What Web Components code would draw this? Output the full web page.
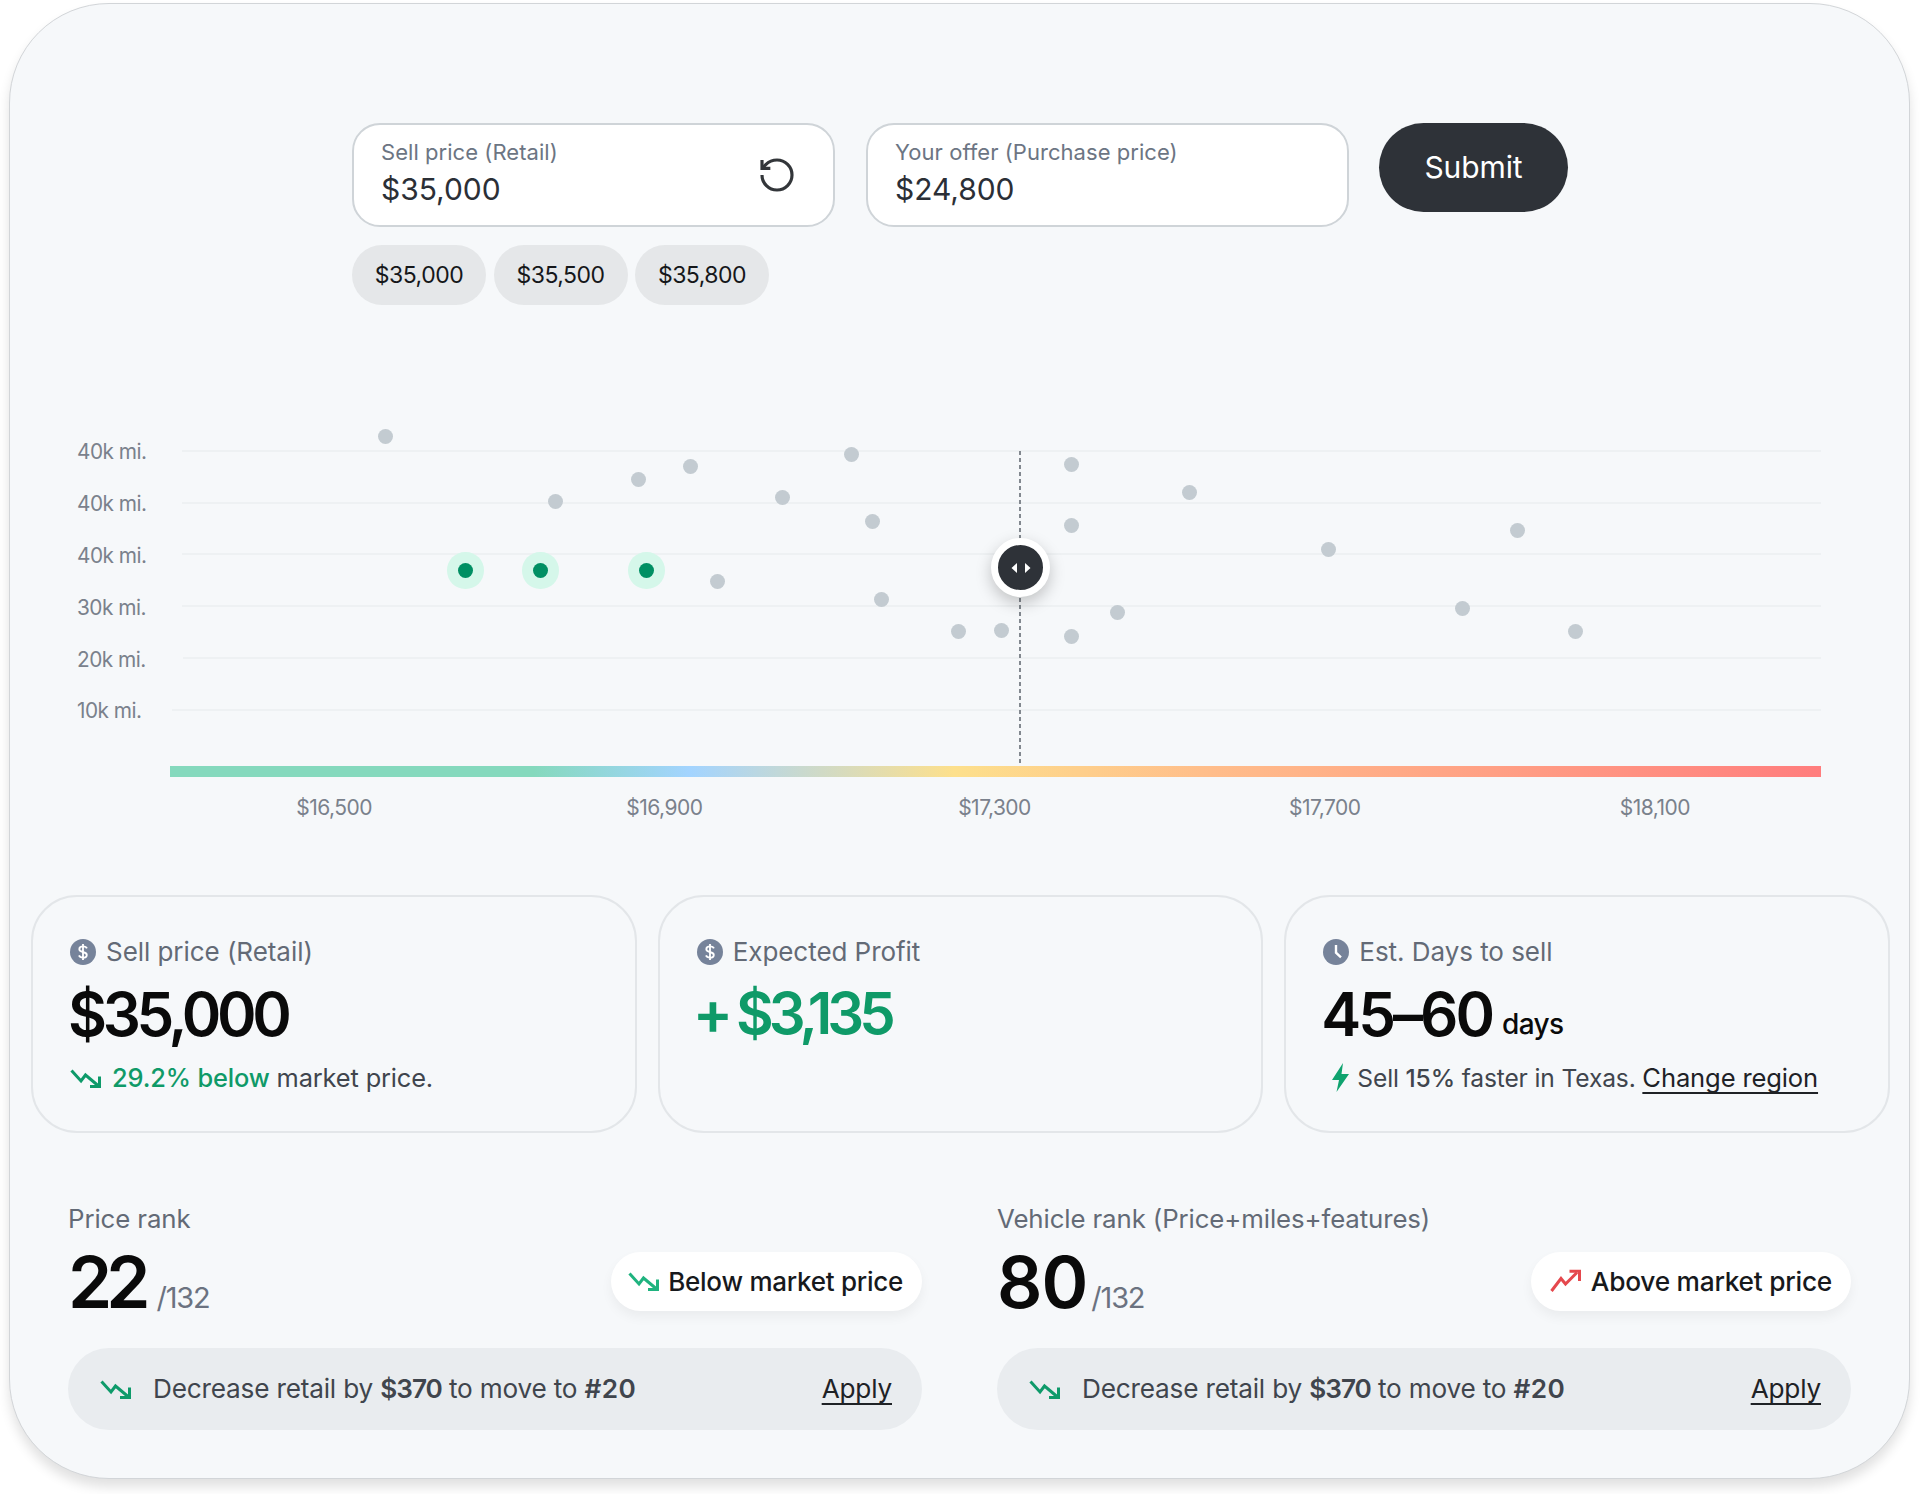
<!DOCTYPE html>
<html lang="en">
<head>
<meta charset="utf-8">
<title>Pricing</title>
<style>
  html, body { margin: 0; background: #fff; }
  body { font-family: Inter, "Liberation Sans", sans-serif; width: 1920px; height: 1494px; overflow: hidden; }
  .row { display: flex; }
  svg { display: block; }
  b { font-weight: 600; }
</style>
</head>
<body>
<svg width="0" height="0" style="position:absolute">
  <defs>
    <symbol id="dollar" viewBox="0 0 24 24"><circle cx="12" cy="12" r="12" fill="#76839a"/><path d="M15.6 8.6 C15 7.2 13.7 6.8 12 6.8 C10 6.8 8.6 7.8 8.6 9.4 C8.6 11 10 11.5 12 12 C14 12.5 15.5 13.1 15.5 14.7 C15.5 16.3 14 17.2 12 17.2 C10.2 17.2 8.9 16.6 8.3 15.2 M12 4.6 V19.4" fill="none" stroke="#fff" stroke-width="1.7"/></symbol>
    <symbol id="clock" viewBox="0 0 24 24"><circle cx="12" cy="12" r="12" fill="#76839a"/><path d="M12 5.5 V12.6 L16.6 17" fill="none" stroke="#fff" stroke-width="2.2"/></symbol>
  </defs>
</svg>

<template id="t-frame">
  <style>
    :host { display: block; box-sizing: border-box; width: 1901px; height: 1476px; margin: 3px 0 0 9px; padding: 119px 17px 0 21px;
      background: #f6f8fa; border: 1px solid #d2d5d8; border-radius: 100px; box-shadow: 0 8px 12px rgba(0,0,0,.12); }
  </style><slot></slot>
</template>

<template id="t-form">
  <style>
    :host { display: block; margin-left: 321px; }
    .top { display: flex; align-items: flex-start; gap: 30px; }
    .fields { display: flex; gap: 31px; }
    .chips { display: flex; gap: 7.5px; margin-top: 18px; }
  </style>
  <div class="top"><div class="fields"><slot name="field"></slot></div><slot name="submit"></slot></div>
  <div class="chips"><slot name="chip"></slot></div>
</template>

<template id="t-field">
  <style>
    :host { display: flex; align-items: center; justify-content: space-between; box-sizing: border-box; width: 483px; height: 104px;
      padding: 0 36px 0 27px; background: #fff; border: 2px solid #cfd4d8; border-radius: 28px; }
    .label { font-size: 22px; line-height: 28px; color: #6c7583; letter-spacing: .05px; margin-top: -5px; }
    .value { font-size: 30px; line-height: 36px; color: #2b2f36; margin-top: 5px; letter-spacing: -.05px; }
  </style>
  <div><div class="label"><slot name="label"></slot></div><div class="value"><slot name="value"></slot></div></div>
  <slot name="action"></slot>
</template>

<template id="t-submit">
  <style>
    :host { display: flex; align-items: center; justify-content: center; box-sizing: border-box; width: 189px; height: 89px; padding-bottom: 2px; border-radius: 45px;
      background: #2e3238; color: #fff; font-size: 30px; font-weight: 400; letter-spacing: -.1px; }
  </style><slot></slot>
</template>

<template id="t-chip">
  <style>
    :host { display: flex; align-items: center; justify-content: center; width: 134px; height: 60px; border-radius: 30px;
      background: #e5e7e9; color: #15171a; font-size: 23px; letter-spacing: -.5px; }
  </style><slot></slot>
</template>

<template id="t-chart">
  <style>
    :host { display: block; position: relative; margin-top: 120px; }
    .rows { display: flex; flex-direction: column; padding: 0 71px 0 46px; }
    .bar { height: 11px; margin: 30px 71px 0 139px;
      background: linear-gradient(90deg, #85d9bd 0%, #85d9bd 22%, #a3d4ff 31.5%, #fde08c 47.5%, #ffbd8a 63%, #ff7d7d 100%); }
    .axis { display: flex; margin: 18px 72px 0 138px; }
    .guide { position: absolute; left: 988px; top: 26px; width: 2px; height: 315px;
      background: repeating-linear-gradient(180deg, #82888f 0 4px, transparent 4px 7px); }
  </style>
  <div class="rows"><slot name="row"></slot></div>
  <div class="bar"></div>
  <div class="axis"><slot name="tick"></slot></div>
  <div class="guide"></div>
  <slot></slot>
</template>

<template id="t-row">
  <style>
    :host { display: flex; align-items: center; height: 51.8px; color: #7a818c; font-size: 20.8px; letter-spacing: -.5px; }
    .t { width: var(--lw, 105px); flex: none; padding-top: 2px; }
    .l { flex: 1; height: 2px; background: #eef1f3; }
  </style>
  <div class="t"><slot></slot></div><div class="l"></div>
</template>

<template id="t-tick">
  <style>:host { display: block; flex: 1; text-align: center; color: #7a818c; font-size: 21px; line-height: 26px; letter-spacing: -.5px; }</style><slot></slot>
</template>

<template id="t-dot">
  <style>
    :host { position: absolute; left: var(--x); top: var(--y); width: 15px; height: 15px; margin: -7.5px 0 0 -7.5px; border-radius: 50%; background: #c3cbd1; }
    :host([hot]) { background: #008f63; box-shadow: 0 0 0 11px #d5f7ea; }
  </style>
</template>

<template id="t-handle">
  <style>
    :host { position: absolute; left: 960px; top: 113px; display: flex; align-items: center; justify-content: center; box-sizing: border-box;
      width: 59px; height: 59px; border-radius: 50%; background: #2e3238; border: 7.5px solid #fff; box-shadow: 0 6px 16px rgba(0,0,0,.22); }
  </style>
  <svg width="20" height="12" viewBox="0 0 20 12"><path d="M6 1 V11 L0.5 6 Z M14 1 V11 L19.5 6 Z" fill="#fff"/></svg>
</template>

<template id="t-stats">
  <style>:host { display: flex; gap: 21px; margin: 74px 2px 0 0; }</style><slot></slot>
</template>

<template id="t-stat">
  <style>
    :host { display: block; flex: 1; box-sizing: border-box; height: 238px; padding: 42px 0 0 37px; border: 2px solid #e3e6e9; border-radius: 46px; }
    .head { display: flex; align-items: center; gap: 10px; height: 26px; font-size: 26px; color: #636a76; letter-spacing: -.05px; }
    .val { display: flex; align-items: baseline; height: 70px; line-height: 70px; margin: 14px 0 0 -2px; font-size: 60px; font-weight: 600; letter-spacing: -4.3px; color: #0a0a0a; }
    .note { display: flex; align-items: center; height: 30px; margin-top: 14px; font-size: 25.4px; color: #40454d; letter-spacing: -.15px; }
  </style>
  <div class="head"><slot name="icon"></slot><slot name="label"></slot></div>
  <div class="val"><slot name="value"></slot></div>
  <div class="note"><slot name="note"></slot></div>
</template>

<template id="t-ranks">
  <style>:host { display: flex; gap: 75px; padding: 0 41px 0 37px; margin-top: 71px; }</style><slot></slot>
</template>

<template id="t-rank">
  <style>
    :host { display: block; flex: 1; min-width: 0; }
    .title { font-size: 25.8px; line-height: 30px; color: #636a76; letter-spacing: -.1px; }
    .mid { display: flex; align-items: center; justify-content: space-between; height: 59px; margin-top: 18px; }
    .num { display: flex; align-items: baseline; margin-top: 17px; }
    .big { font-size: 71px; line-height: 59px; font-weight: 600; letter-spacing: -6px; color: #0a0a0a; }
    .of { font-size: 29px; line-height: 59px; color: #6b7280; letter-spacing: -1.2px; }
    .tip { display: flex; align-items: center; justify-content: space-between; box-sizing: border-box; height: 82px; margin-top: 37px; padding: 0 30px 0 32px;
      border-radius: 41px; background: #e9ecef; font-size: 26.2px; color: #40454d; letter-spacing: -.2px; }
    .tip .left { display: flex; align-items: center; gap: 22px; }
  </style>
  <div class="title"><slot name="title"></slot></div>
  <div class="mid">
    <div class="num"><span class="big"><slot name="rank"></slot></span><span class="of"><slot name="of"></slot></span></div>
    <slot name="pill"></slot>
  </div>
  <div class="tip"><div class="left"><slot name="icon"></slot><span><slot name="tip"></slot></span></div><slot name="apply"></slot></div>
</template>

<template id="t-pill">
  <style>
    :host { display: flex; align-items: center; gap: 9px; height: 59px; box-sizing: border-box; padding: 0 19px 0 17px; border-radius: 30px; background: #fff;
      box-shadow: 0 6px 12px rgba(0,0,0,.05); font-size: 26px; font-weight: 500; color: #17191c; letter-spacing: -.25px; --c: #1fb37f; }
  </style><slot></slot>
</template>

<template id="t-icon">
  <style>:host { display: block; flex: none; color: var(--c, #0e9a6a); width: var(--w, 31px); height: var(--h, 20px); }
    svg { display: block; width: 100%; height: 100%; }</style>
</template>

<template id="t-link">
  <style>:host { color: #1f2226; text-decoration: underline; text-decoration-thickness: 2px; text-underline-offset: 5px; text-decoration-skip-ink: none; }</style><slot></slot>
</template>

<frame-card>
  <offer-form>
    <offer-field slot="field">
      <span slot="label">Sell price (Retail)</span>
      <span slot="value">$35,000</span>
      <svg slot="action" width="40" height="40" viewBox="0 0 24 24" fill="none" stroke="#33363a" stroke-width="1.9"><path d="M3 12a9 9 0 1 0 9-9 9.75 9.75 0 0 0-6.74 2.74L3 8"/><path d="M3 3v5h5"/></svg>
    </offer-field>
    <offer-field slot="field">
      <span slot="label">Your offer (Purchase price)</span>
      <span slot="value">$24,800</span>
    </offer-field>
    <submit-button slot="submit">Submit</submit-button>
    <price-chip slot="chip">$35,000</price-chip>
    <price-chip slot="chip">$35,500</price-chip>
    <price-chip slot="chip">$35,800</price-chip>
  </offer-form>

  <scatter-chart>
    <chart-row slot="row">40k mi.</chart-row>
    <chart-row slot="row">40k mi.</chart-row>
    <chart-row slot="row">40k mi.</chart-row>
    <chart-row slot="row">30k mi.</chart-row>
    <chart-row slot="row" style="--lw:106px">20k mi.</chart-row>
    <chart-row slot="row" style="--lw:95px">10k mi.</chart-row>
    <chart-tick slot="tick">$16,500</chart-tick>
    <chart-tick slot="tick">$16,900</chart-tick>
    <chart-tick slot="tick">$17,300</chart-tick>
    <chart-tick slot="tick">$17,700</chart-tick>
    <chart-tick slot="tick">$18,100</chart-tick>
    <chart-dot style="--x:354px;--y:11px"></chart-dot>
    <chart-dot style="--x:524.5px;--y:76px"></chart-dot>
    <chart-dot style="--x:607px;--y:54px"></chart-dot>
    <chart-dot style="--x:659px;--y:41px"></chart-dot>
    <chart-dot style="--x:820px;--y:29.7px"></chart-dot>
    <chart-dot style="--x:751px;--y:72.7px"></chart-dot>
    <chart-dot style="--x:841px;--y:96.7px"></chart-dot>
    <chart-dot style="--x:686px;--y:156px"></chart-dot>
    <chart-dot style="--x:850.4px;--y:174.7px"></chart-dot>
    <chart-dot style="--x:927px;--y:206px"></chart-dot>
    <chart-dot style="--x:970px;--y:205.7px"></chart-dot>
    <chart-dot style="--x:1040.8px;--y:39px"></chart-dot>
    <chart-dot style="--x:1158.8px;--y:67px"></chart-dot>
    <chart-dot style="--x:1040.8px;--y:100.7px"></chart-dot>
    <chart-dot style="--x:1297px;--y:124.3px"></chart-dot>
    <chart-dot style="--x:1486.6px;--y:105.7px"></chart-dot>
    <chart-dot style="--x:1086px;--y:187.3px"></chart-dot>
    <chart-dot style="--x:1040.8px;--y:211.7px"></chart-dot>
    <chart-dot style="--x:1431.7px;--y:183.7px"></chart-dot>
    <chart-dot style="--x:1544.6px;--y:206px"></chart-dot>
    <chart-dot hot style="--x:434.6px;--y:145px"></chart-dot>
    <chart-dot hot style="--x:509.8px;--y:145px"></chart-dot>
    <chart-dot hot style="--x:615px;--y:145px"></chart-dot>
    <chart-handle></chart-handle>
  </scatter-chart>

  <stat-row>
    <stat-card>
      <svg slot="icon" width="26" height="26"><use href="#dollar"/></svg>
      <span slot="label">Sell price (Retail)</span>
      <span slot="value">$35,000</span>
      <span slot="note" class="row" style="align-items:center;gap:11px">
        <trend-icon kind="down"></trend-icon>
        <span><span style="color:#0f9a68;font-weight:500">29.2% below</span> market price.</span>
      </span>
    </stat-card>
    <stat-card>
      <svg slot="icon" width="26" height="26"><use href="#dollar"/></svg>
      <span slot="label">Expected Profit</span>
      <span slot="value" class="row" style="color:#0f9a68;align-items:baseline;margin:-2px 0 0 -2px"><span style="letter-spacing:0;margin-right:3px">+</span><span style="font-size:58px;letter-spacing:-5px">$3,135</span></span>
    </stat-card>
    <stat-card>
      <svg slot="icon" width="26" height="26"><use href="#clock"/></svg>
      <span slot="label">Est. Days to sell</span>
      <span slot="value" style="letter-spacing:-3px">45–60<span style="font-size:28px;font-weight:500;letter-spacing:-.6px;margin-left:10px;vertical-align:2px">days</span></span>
      <span slot="note" class="row" style="align-items:center;gap:8px">
        <svg width="17" height="29" viewBox="0 0 17 29" style="margin-left:9px"><path d="M11 0 L0 17 H7 L4.5 29 L17 11 H9.5 Z" fill="#0fa36f"/></svg>
        <span style="font-size:24.6px">Sell <span style="font-weight:500">15%</span> faster in Texas. <text-link style="font-size:25.6px">Change region</text-link></span>
      </span>
    </stat-card>
  </stat-row>

  <rank-row>
    <rank-panel>
      <span slot="title">Price rank</span>
      <span slot="rank">22</span>
      <span slot="of" style="margin-left:12px">/132</span>
      <market-pill slot="pill"><trend-icon kind="down"></trend-icon>Below market price</market-pill>
      <trend-icon slot="icon" kind="down"></trend-icon>
      <span slot="tip">Decrease retail by <b style="letter-spacing:-1px">$370</b> to move to <b style="letter-spacing:.4px">#20</b></span>
      <text-link slot="apply">Apply</text-link>
    </rank-panel>
    <rank-panel>
      <span slot="title">Vehicle rank (Price+miles+features)</span>
      <span slot="rank" style="letter-spacing:-1px">80</span>
      <span slot="of" style="margin-left:4px">/132</span>
      <market-pill slot="pill" style="font-size:26.3px;padding-left:19px;gap:10px"><trend-icon kind="up"></trend-icon>Above market price</market-pill>
      <trend-icon slot="icon" kind="down"></trend-icon>
      <span slot="tip">Decrease retail by <b style="letter-spacing:-1px">$370</b> to move to <b style="letter-spacing:.4px">#20</b></span>
      <text-link slot="apply">Apply</text-link>
    </rank-panel>
  </rank-row>
</frame-card>

<script>
  const map = { 'frame-card':'t-frame','offer-form':'t-form','offer-field':'t-field','submit-button':'t-submit','price-chip':'t-chip',
    'scatter-chart':'t-chart','chart-row':'t-row','chart-tick':'t-tick','chart-dot':'t-dot','chart-handle':'t-handle',
    'stat-row':'t-stats','stat-card':'t-stat','rank-row':'t-ranks','rank-panel':'t-rank','market-pill':'t-pill','text-link':'t-link' };
  for (const [name, id] of Object.entries(map)) {
    customElements.define(name, class extends HTMLElement {
      constructor() { super(); this.attachShadow({mode:'open'}).append(document.getElementById(id).content.cloneNode(true)); }
    });
  }
  customElements.define('trend-icon', class extends HTMLElement {
    constructor() {
      super();
      this.attachShadow({mode:'open'}).append(document.getElementById('t-icon').content.cloneNode(true));
    }
    connectedCallback() {
      const up = this.getAttribute('kind') === 'up';
      const body = up
        ? '<path d="M1.5 22 L11 9.5 L15.5 15 L27 3.5" fill="none" stroke="currentColor" stroke-width="3"/><path d="M19.5 2.2 H29.5 V12" fill="none" stroke="currentColor" stroke-width="3"/>'
        : '<path d="M1.5 2.5 L11 13 L15.5 7 L28 17.5" fill="none" stroke="currentColor" stroke-width="3"/><path d="M29.5 8.5 V18.5 H20" fill="none" stroke="currentColor" stroke-width="3"/>';
      const wrap = document.createElement('template');
      wrap.innerHTML = '<svg viewBox="0 0 31 ' + (up ? 24 : 20) + '">' + body + '</svg>';
      this.shadowRoot.append(wrap.content);
      if (up) { this.style.setProperty('--c', '#e5484d'); this.style.setProperty('--h', '24px'); }
    }
  });
</script>
</body>
</html>
